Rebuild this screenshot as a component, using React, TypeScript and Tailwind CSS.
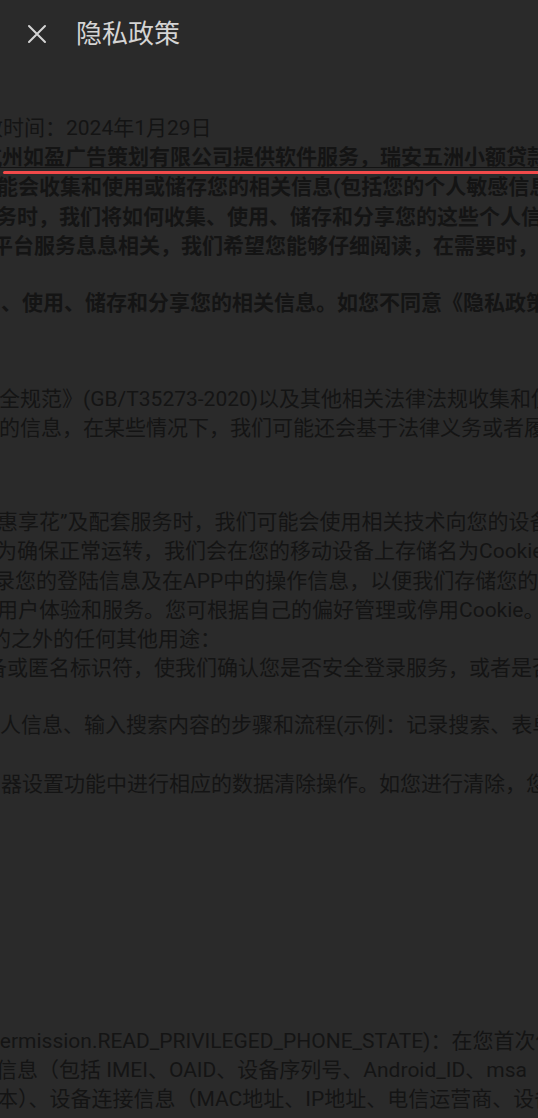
import React from 'react'

type Line = {
  cls: string
  text: string
  bold?: boolean
  mark?: boolean
}

// each line is clipped by the screen on both sides, like the scrolled webview
const lines: Line[] = [
  { cls: 'h-[29px] ml-[-18px]', text: '效时间：2024年1月29日' },
  { cls: 'h-[30px] ml-[-19px]', text: '杭州如盈广告策划有限公司提供软件服务，瑞安五洲小额贷款有限公司', bold: true, mark: true },
  { cls: 'h-[30px] ml-[-3px]', text: '能会收集和使用或储存您的相关信息(包括您的个人敏感信息)，', bold: true },
  { cls: 'h-[29px] ml-[-4px]', text: '务时，我们将如何收集、使用、储存和分享您的这些个人信息，', bold: true },
  { cls: 'h-[57px] ml-[-8px]', text: '平台服务息息相关，我们希望您能够仔细阅读，在需要时，按照', bold: true },
  { cls: 'h-[96px] ml-[1px]', text: '、使用、储存和分享您的相关信息。如您不同意《隐私政策》', bold: true },
  { cls: 'h-[29px] ml-[-1px]', text: '全规范》(GB/T35273-2020)以及其他相关法律法规收集和使用' },
  { cls: 'h-[94px] ml-[-1px]', text: '的信息，在某些情况下，我们可能还会基于法律义务或者履行' },
  { cls: 'h-[29px] ml-[-3px]', text: '惠享花”及配套服务时，我们可能会使用相关技术向您的设备发送' },
  { cls: 'h-[30px] ml-[-4px]', text: '为确保正常运转，我们会在您的移动设备上存储名为Cookie的小数据文件' },
  { cls: 'h-[29px] ml-[-6px]', text: '录您的登陆信息及在APP中的操作信息，以便我们存储您的偏好' },
  { cls: 'h-[29px] ml-[-3px]', text: '用户体验和服务。您可根据自己的偏好管理或停用Cookie。我们' },
  { cls: 'h-[29px] ml-[-10px]', text: '的之外的任何其他用途：' },
  { cls: 'h-[57px] ml-[-14px]', text: '备或匿名标识符，使我们确认您是否安全登录服务，或者是否遭遇' },
  { cls: 'h-[59px] ml-[0px]', text: '人信息、输入搜索内容的步骤和流程(示例：记录搜索、表单填写' },
  { cls: 'h-[257px] ml-[1px]', text: '器设置功能中进行相应的数据清除操作。如您进行清除，您可能' },
  { cls: 'h-[29px] ml-[-12px]', text: 'permission.READ_PRIVILEGED_PHONE_STATE)：在您首次使用' },
  { cls: 'h-[29px] ml-[-4px]', text: '信息（包括 IMEI、OAID、设备序列号、Android_ID、msa' },
  { cls: 'h-[29px] ml-[-3px]', text: '本）、设备连接信息（MAC地址、IP地址、电信运营商、设备' },
]

function CloseIcon() {
  return (
    <svg width="20" height="20" viewBox="0 0 20 20" fill="none" stroke="#d4d4d4" strokeWidth="2" strokeLinecap="round">
      <path d="M2 2L18 18M18 2L2 18" />
    </svg>
  )
}

export default function App() {
  return (
    <div className="h-[1118px] w-[538px] overflow-hidden bg-[#2a2a2a] font-['Roboto','Noto_Sans_CJK_SC',sans-serif]">
      {/* Header */}
      <div className="flex h-[68px] items-center">
        <div className="ml-[27px] flex h-[20px] w-[20px] items-center justify-center">
          <CloseIcon />
        </div>
        <h1 className="ml-[29px] text-[26px] leading-none text-[#d4d4d4]">隐私政策</h1>
      </div>

      {/* Body */}
      <div className="flex flex-col pt-[46px] text-[21px] leading-[29px] text-[#141414]">
        {lines.map((line, i) => (
          <div key={i} className={`relative shrink-0 whitespace-nowrap ${line.cls}`}>
            <span className={line.bold ? 'font-bold' : 'font-normal'}>
              {line.mark ? <span className="underline decoration-1 underline-offset-[3px]">{line.text}</span> : line.text}
            </span>
            {line.mark && (
              <span className="absolute left-[22px] top-[28px] h-[3px] w-[560px] rounded-l-full bg-[#f24a4a]" />
            )}
          </div>
        ))}
      </div>
    </div>
  )
}
